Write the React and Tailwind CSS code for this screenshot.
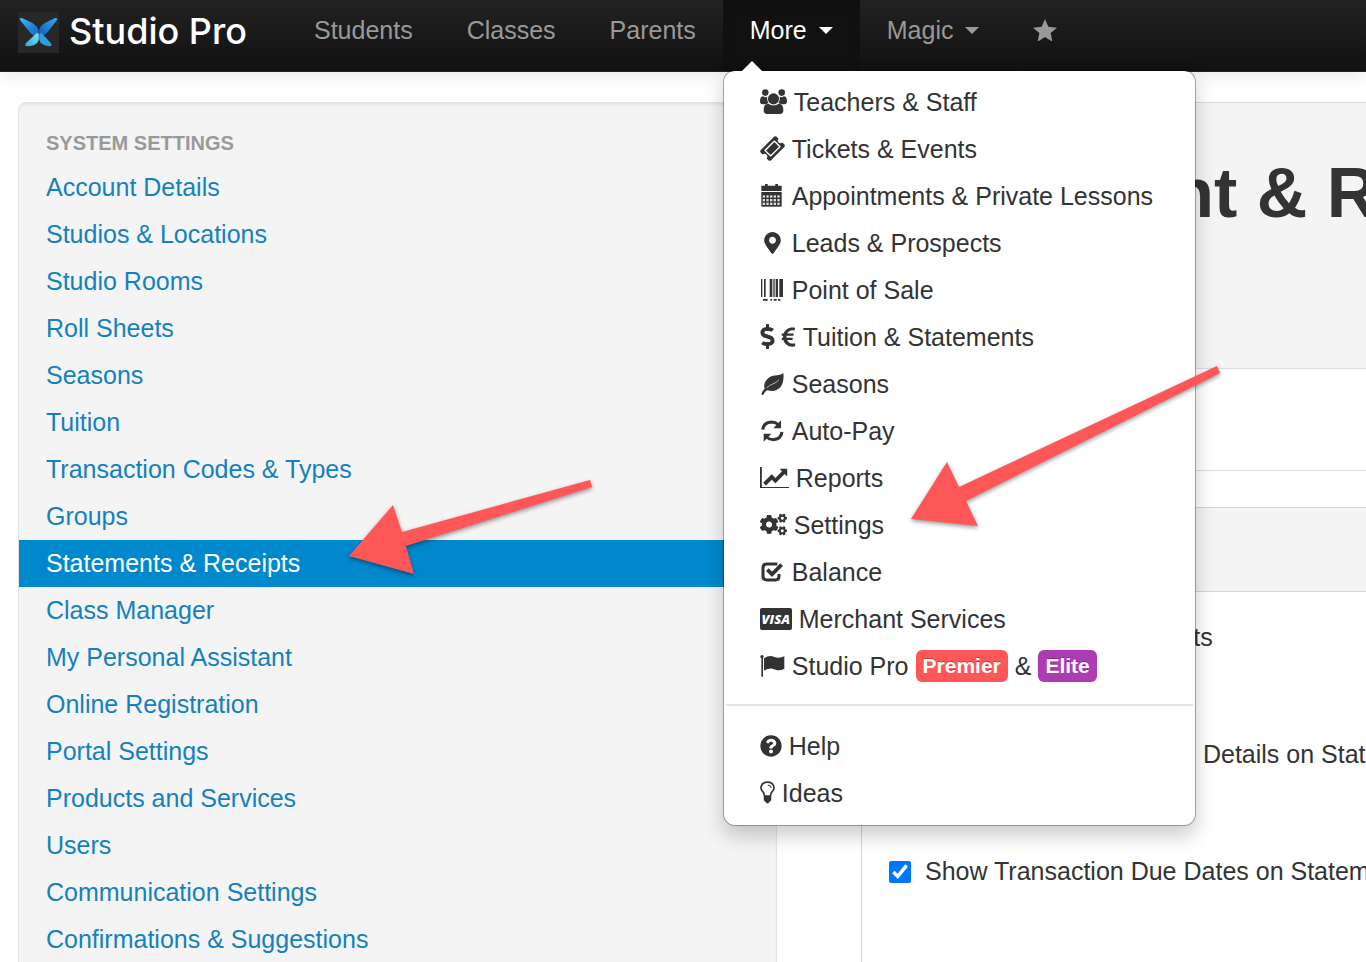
import { FaCogs, FaDollarSign, FaEuroSign, FaMapMarkerAlt, FaQuestionCircle } from 'react-icons/fa'

const navLinks = ['Students', 'Classes', 'Parents']

const settingsLinks = [
  'Account Details',
  'Studios & Locations',
  'Studio Rooms',
  'Roll Sheets',
  'Seasons',
  'Tuition',
  'Transaction Codes & Types',
  'Groups',
  'Statements & Receipts',
  'Class Manager',
  'My Personal Assistant',
  'Online Registration',
  'Portal Settings',
  'Products and Services',
  'Users',
  'Communication Settings',
  'Confirmations & Suggestions',
]

const options = [
  'Show Credits on Receipts',
  'Show Entire Transaction Details on Statements',
  'Show Transaction Due Dates on Statements',
]

function Logo() {
  return (
    <svg viewBox="0 0 123 123" className="size-[41px] shrink-0 bg-[#282828]" aria-hidden="true">
      <defs>
        <linearGradient id="wing-left" x1="0" y1="0" x2="1" y2="1">
          <stop offset="0" stopColor="#45bdf0" />
          <stop offset="0.5" stopColor="#1e88d8" />
          <stop offset="1" stopColor="#1560c0" />
        </linearGradient>
        <linearGradient id="wing-right" x1="1" y1="0" x2="0" y2="1">
          <stop offset="0" stopColor="#35aeea" />
          <stop offset="1" stopColor="#0c4fb4" />
        </linearGradient>
        <linearGradient id="tail" x1="1" y1="0" x2="0" y2="1">
          <stop offset="0" stopColor="#7fe3ea" />
          <stop offset="1" stopColor="#2aa9e0" />
        </linearGradient>
      </defs>
      <path d="M5 20Q6 17 12 18L42 32Q58 41 62 56V84L44 68Q38 64 32 56L6 24Z" fill="url(#wing-left)" />
      <path d="M118 20Q117 17 111 18L82 32Q66 41 63 56V84L80 68Q86 64 92 56L117 24Z" fill="url(#wing-right)" />
      <path d="M57 62L24 93Q18 103 28 103Q50 101 58 92L62 84V66Z" fill="url(#tail)" />
      <path d="M64 66L70 62L99 94Q103 103 95 103Q76 100 68 92L64 84Z" fill="#2b9fe2" />
    </svg>
  )
}

function StarIcon() {
  return (
    <svg viewBox="0 0 72 68" className="w-[24px]" fill="currentColor" aria-hidden="true">
      <path d="M36 0L46 23L72 26L53 42L58 68L36 54L14 68L19 42L0 26L26 23Z" />
    </svg>
  )
}

function UsersIcon() {
  return (
    <svg viewBox="0 0 82 76" className="w-[27px]" fill="currentColor">
      <circle cx="16" cy="11" r="10" />
      <circle cx="66" cy="11" r="10" />
      <path d="M10 22Q16 27 22 23Q20 34 26 43Q20 44 17 46H8Q0 46 0 37Q0 22 10 22Z" />
      <path d="M72 22Q66 27 60 23Q62 34 56 43Q62 44 65 46H74Q82 46 82 37Q82 22 72 22Z" />
      <circle cx="41" cy="30" r="17" />
      <path d="M25 45Q41 55 57 45Q71 45 71 64Q71 76 61 76H21Q11 76 11 64Q11 45 25 45Z" />
    </svg>
  )
}

function TicketIcon() {
  return (
    <svg viewBox="40 40 1710 1710" className="w-[25px]" fill="currentColor">
      <path d="M1024 452l316 316-572 572-316-316zm-211 979l618-618q19-19 19-45t-19-45l-362-362q-18-18-45-18t-45 18l-618 618q-19 19-19 45t19 45l362 362q18 18 45 18t45-18zm889-637l-907 908q-37 37-90.5 37t-90.5-37l-126-126q56-56 56-136t-56-136-136-56-136 56l-125-126q-37-37-37-90.5t37-90.5l907-906q37-37 90.5-37t90.5 37l125 125q-56 56-56 136t56 136 136 56 136-56l126 125q37 37 37 90.5t-37 90.5z" />
    </svg>
  )
}

function CalendarIcon() {
  const cells = []
  for (let row = 0; row < 3; row++) {
    for (let col = 0; col < 5; col++) cells.push([8 + col * 11, 34 + row * 11])
  }
  return (
    <svg viewBox="0 0 75 68" className="w-[25px]" fill="currentColor">
      <path d="M4 5H15V0H23V5H46V0H54V5H65V21H4Z" />
      <path d="M4 24H65V68H4Z" />
      {cells.map(([x, y]) => <rect key={`${x}-${y}`} x={x} y={y} width="7" height="7" fill="#ddd" />)}
    </svg>
  )
}

function BarcodeIcon() {
  return (
    <svg viewBox="0 0 75 66" className="w-[25px]" fill="currentColor">
      <path d="M3 0h4v54H3zM12 0h5v54h-5zM29 0h8v54h-8zM40 0h4v54h-4zM47 0h7v54h-7zM58 0h11v54H58zM9 60h14v5H9zM31 60h5v5h-5zM41 60h9v5h-9zM54 60h7v5h-7z" />
    </svg>
  )
}

function LeafIcon() {
  return (
    <svg viewBox="0 0 75 66" className="w-[25px]" fill="currentColor">
      <path d="M70 0Q73 28 61 43Q46 59 22 52Q15 55 10 65L4 66Q5 56 14 47Q9 30 23 17Q35 7 52 7Q64 6 70 0Z" />
      <path d="M20 45Q28 36 38 33Q50 29 57 20" fill="none" stroke="#bbb" strokeWidth="3" />
    </svg>
  )
}

function RefreshIcon() {
  return (
    <svg viewBox="0 0 75 66" className="w-[25px]">
      <path d="M8 29Q11 7 35 6Q46 6 55 14M66 36Q63 58 39 59Q28 59 19 51" fill="none" stroke="currentColor" strokeWidth="9" />
      <path d="M63 1V25H40ZM11 65V41H34Z" fill="currentColor" />
    </svg>
  )
}

function ChartIcon() {
  return (
    <svg viewBox="0 128 2048 1536" className="w-[29px]" fill="currentColor">
      <path d="M2048 1536v128h-2048v-1536h128v1408h1920zm-128-1248v435q0 21-19.5 29.5t-35.5-7.5l-121-121-633 633q-10 10-23 10t-23-10l-233-233-416 416-192-192 585-585q10-10 23-10t23 10l233 233 464-464-121-121q-16-16-7.5-35.5t29.5-19.5h435q14 0 23 9t9 23z" />
    </svg>
  )
}

function CheckIcon() {
  return (
    <svg viewBox="0 0 75 60" className="w-[25px]" fill="none" stroke="currentColor">
      <path d="M52 6H20Q9 6 9 17V43Q9 54 20 54H46Q57 54 57 43V36" strokeWidth="9" />
      <path d="M22 23L36 37L65 8" strokeWidth="11" />
    </svg>
  )
}

function VisaIcon() {
  return (
    <span className="flex h-[22px] w-[32px] items-center justify-center rounded-[2px] bg-[#333] font-['Open_Sans',sans-serif] text-[13px] font-extrabold text-white italic">
      VISA
    </span>
  )
}

function FlagIcon() {
  return (
    <svg viewBox="0 0 75 66" className="w-[25px]" fill="currentColor">
      <circle cx="6" cy="5" r="5" />
      <path d="M4 5H9V65H4Z" />
      <path d="M12 10Q27 0 41 5Q58 12 73 4V41Q58 50 42 43Q29 37 12 47Z" />
    </svg>
  )
}

function BulbIcon() {
  return (
    <svg viewBox="0 0 44 66" className="w-[15px]">
      <path d="M13 43Q13 36 7 30Q2 24 3 18Q6 3 22 3Q38 3 41 18Q42 24 37 30Q31 36 31 43" fill="none" stroke="currentColor" strokeWidth="5" />
      <path d="M23 12Q31 13 33 20" fill="none" stroke="currentColor" strokeWidth="3" />
      <path d="M11 42H33V56Q32 60 28 61Q26 66 22 66Q18 66 16 61Q12 60 11 56Z" fill="currentColor" />
    </svg>
  )
}

const menuItems = [
  { label: 'Teachers & Staff', icon: <UsersIcon /> },
  { label: 'Tickets & Events', icon: <TicketIcon /> },
  { label: 'Appointments & Private Lessons', icon: <CalendarIcon /> },
  { label: 'Leads & Prospects', icon: <FaMapMarkerAlt className="h-[22px] w-[25px]" /> },
  { label: 'Point of Sale', icon: <BarcodeIcon /> },
  {
    label: 'Tuition & Statements',
    icon: (
      <span className="flex items-center gap-[6px]">
        <FaDollarSign className="h-[25px] w-[15px]" />
        <FaEuroSign className="h-[22px] w-[15px]" />
      </span>
    ),
  },
  { label: 'Seasons', icon: <LeafIcon /> },
  { label: 'Auto-Pay', icon: <RefreshIcon /> },
  { label: 'Reports', icon: <ChartIcon /> },
  { label: 'Settings', icon: <FaCogs className="size-[27px]" /> },
  { label: 'Balance', icon: <CheckIcon /> },
  { label: 'Merchant Services', icon: <VisaIcon /> },
]

function MenuItem({ icon, children }) {
  return (
    <li>
      <a href="#" className="flex h-[47px] items-center gap-[7px] pl-9 whitespace-nowrap text-[#333]">
        {icon}
        <span>{children}</span>
      </a>
    </li>
  )
}

function Badge({ className, children }) {
  return <span className={`rounded-md px-[7px] py-1 text-[21px] leading-6 font-bold text-white [text-shadow:0_-1px_0_rgba(0,0,0,0.25)] ${className}`}>{children}</span>
}

function MoreMenu() {
  return (
    <div className="absolute top-[70px] left-0 z-20 w-[473px] rounded-xl border border-black/30 bg-white bg-clip-padding pt-[7px] pb-[9px] shadow-[0_10px_20px_rgba(0,0,0,0.2)]">
      <span className="absolute -top-[10px] left-[18px] border-x-[10px] border-b-[10px] border-x-transparent border-b-white" />
      <ul>
        {menuItems.map((item) => <MenuItem key={item.label} icon={item.icon}>{item.label}</MenuItem>)}
        <MenuItem icon={<FlagIcon />}>
          <span className="flex items-center gap-[7px]">
            Studio Pro <Badge className="bg-[#ff5757]">Premier</Badge> & <Badge className="bg-[#ad3bb3]">Elite</Badge>
          </span>
        </MenuItem>
      </ul>
      <hr className="mx-[2px] mt-[15px] mb-[16px] border-t-2 border-[#e5e5e5]" />
      <ul>
        <MenuItem icon={<FaQuestionCircle className="size-[22px]" />}>Help</MenuItem>
        <MenuItem icon={<BulbIcon />}>Ideas</MenuItem>
      </ul>
    </div>
  )
}

function Caret() {
  return <span className="border-x-[7px] border-t-[7px] border-x-transparent border-t-current" />
}

function Navbar() {
  return (
    <header className="relative z-10 flex h-[72px] border-b border-[#252525] bg-linear-to-b from-[#222] to-[#111] pl-[18px] text-[#999] shadow-[0_2px_20px_rgba(0,0,0,0.1)]">
      <a href="#" className="flex w-[269px] shrink-0 gap-[10px] pt-3 font-['Inter',sans-serif] text-[36px] leading-[38px] font-medium whitespace-nowrap text-white">
        <Logo />
        Studio Pro
      </a>
      <nav>
        <ul className="flex leading-[60px]">
          {navLinks.map((label) => (
            <li key={label}>
              <a href="#" className="block px-[27px]">{label}</a>
            </li>
          ))}
          <li className="relative">
            <button type="button" className="flex h-[71px] items-center gap-[12px] bg-[#111] px-[27px] pb-[11px] text-white shadow-[inset_0_3px_8px_rgba(0,0,0,0.125)]">
              More <Caret />
            </button>
            <MoreMenu />
          </li>
          <li>
            <button type="button" className="flex h-[60px] items-center gap-[12px] px-[27px]">
              Magic <Caret />
            </button>
          </li>
          <li>
            <a href="#" aria-label="Favorites" className="flex h-[60px] items-center px-[27px]">
              <StarIcon />
            </a>
          </li>
        </ul>
      </nav>
    </header>
  )
}

function Sidebar() {
  return (
    <aside className="w-[759px] shrink-0 rounded-lg border border-[#e3e3e3] bg-[#f4f4f4] pt-[20px] shadow-[inset_0_2px_2px_rgba(0,0,0,0.05)]">
      <h2 className="mb-px px-[27px] text-[20px] leading-[40px] font-bold text-[#999]">SYSTEM SETTINGS</h2>
      <ul>
        {settingsLinks.map((label) => {
          const active = label === 'Statements & Receipts'
          return (
            <li key={label}>
              <a href="#" className={`block px-[27px] leading-[47px] ${active ? 'bg-[#0088cc] text-white' : 'text-[#1481be]'}`}>{label}</a>
            </li>
          )
        })}
      </ul>
    </aside>
  )
}

function Content() {
  return (
    <main className="min-w-0 flex-1 overflow-hidden whitespace-nowrap">
      <div className="h-[267px] border-y border-[#ddd] bg-[#f4f4f4] px-[38px] pt-[50px]">
        <h1 className="text-[70px] leading-[80px] font-bold text-[#333]">Statement & Receipts</h1>
      </div>
      <div className="h-[102px] border-b border-[#ddd]" />
      <section className="mt-[36px] h-[600px] border border-r-0 border-[#d5d5d5]">
        <div className="h-[84px] border-b border-[#d5d5d5] bg-[#f4f4f4]" />
        <div className="px-[27px] pt-[22px]">
          {options.map((label) => (
            <label key={label} className="mb-[70px] flex h-[47px] items-center gap-[14px]">
              <input type="checkbox" defaultChecked className="size-[22px] shrink-0 accent-[#0075ff]" />
              {label}
            </label>
          ))}
        </div>
      </section>
    </main>
  )
}

function Arrows() {
  return (
    <svg className="pointer-events-none absolute top-0 left-0 z-30 h-[962px] w-[1366px] drop-shadow-[0_2px_2px_rgba(0,0,0,0.4)]" fill="#ff5757" aria-hidden="true">
      <path d="M349 556L393 505L402 532L590 480L592 487L406 546L414 574Z" />
      <path d="M911 519L947 462L959 487L1217 366L1220 373L966 501L978 526Z" />
    </svg>
  )
}

export default function App() {
  return (
    <div className="relative h-screen overflow-hidden bg-white font-['Liberation_Sans',Arial,sans-serif] text-[25px] text-[#333]">
      <Navbar />
      <div className="flex gap-[84px] pt-[30px] pl-[18px]">
        <Sidebar />
        <Content />
      </div>
      <Arrows />
    </div>
  )
}
